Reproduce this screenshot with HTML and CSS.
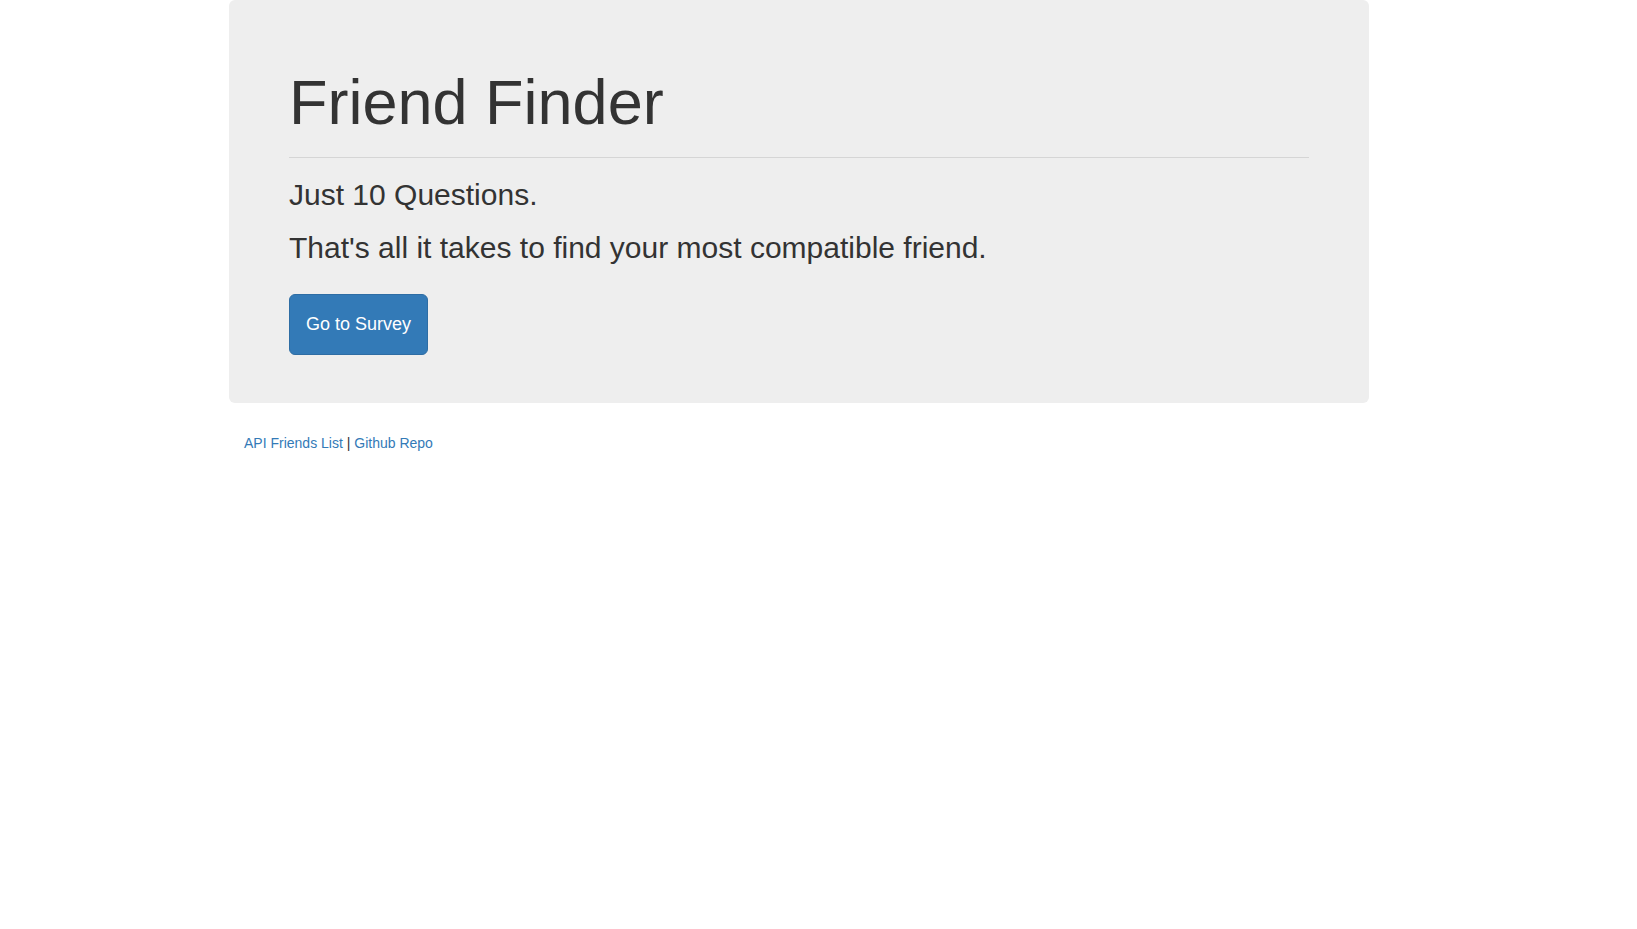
FILE: index.html
```html
<!DOCTYPE html>
<html lang="en">
<head>
<meta charset="utf-8">
<title>Friend Finder</title>
<link rel="stylesheet" href="styles.css">
</head>
<body>
<div class="page">
  <div class="jumbotron">
    <h1 class="title">Friend Finder</h1>
    <hr class="rule">
    <h2 class="lead">Just 10 Questions.</h2>
    <h2 class="lead">That's all it takes to find your most compatible friend.</h2>
    <div class="actions">
      <a class="btn" href="#">Go to Survey</a>
    </div>
  </div>
  <p class="footer"><a class="link" href="#">API Friends List</a> | <a class="link" href="#">Github Repo</a></p>
</div>
</body>
</html>
```

FILE: styles.css
```css
* { box-sizing: border-box; }
html, body { margin: 0; padding: 0; }
body {
  background: #fff;
  font-family: "Liberation Sans", Arial, sans-serif;
  font-size: 14px;
  line-height: 20px;
  color: #333;
}
.page {
  width: 1140px;
  margin-left: 229px;
}
.jumbotron {
  background: #eee;
  border-radius: 6px;
  padding: 48px 60px;
  margin-bottom: 30px;
}
.title {
  margin: 20px 0 10px;
  font-size: 63px;
  line-height: 1.1;
  font-weight: 500;
  color: #333;
}
.rule {
  margin: 20px 0;
  border: 0;
  border-top: 1px solid #d5d5d5;
  height: 0;
}
.lead {
  margin: 20px 0 10px;
  font-size: 30px;
  line-height: 1.1;
  font-weight: 500;
  color: #333;
}
.actions {
  margin-top: 30px;
  display: flex;
}
.btn {
  display: inline-block;
  padding: 17px 16px 18px;
  font-size: 18px;
  line-height: 24px;
  color: #fff;
  background: #337ab7;
  border: 1px solid #2e6da4;
  border-radius: 6px;
  text-decoration: none;
}
.footer {
  margin: 0;
  padding-left: 15px;
  font-size: 14px;
  line-height: 20px;
}
.link {
  color: #337ab7;
  text-decoration: none;
}
```
